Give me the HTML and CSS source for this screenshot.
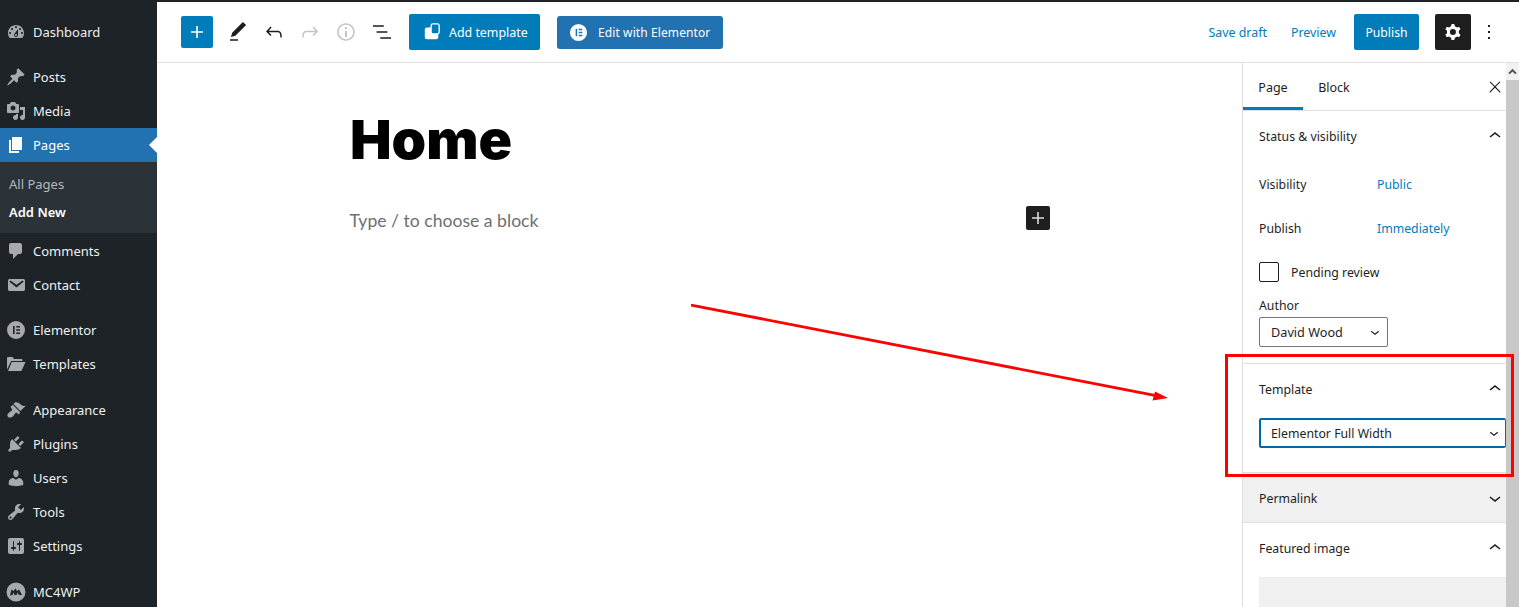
FILE: index.html
```html
<!DOCTYPE html>
<html lang="en">
<head>
<meta charset="utf-8">
<title>Edit Page</title>
<link rel="stylesheet" href="styles.css">
</head>
<body>
<div class="app">
  <nav class="adminmenu">
    <ul class="menu-group first">
      <li class="item"><svg class="dash" viewBox="0 0 20 20"><path fill-rule="evenodd" d="M3.76 16h12.48c1.1-1.37 1.76-3.11 1.76-5 0-4.42-3.58-8-8-8s-8 3.58-8 8c0 1.89.66 3.63 1.76 5zM10 4c.55 0 1 .45 1 1s-.45 1-1 1-1-.45-1-1 .45-1 1-1zM6 6c.55 0 1 .45 1 1s-.45 1-1 1-1-.45-1-1 .45-1 1-1zm8 0c.55 0 1 .45 1 1s-.45 1-1 1-1-.45-1-1 .45-1 1-1zm-5.37 5.55L12 7v6c0 1.1-.9 2-2 2s-2-.9-2-2c0-.57.24-1.08.63-1.45zM4 10c.55 0 1 .45 1 1s-.45 1-1 1-1-.45-1-1 .45-1 1-1zm12 0c.55 0 1 .45 1 1s-.45 1-1 1-1-.45-1-1 .45-1 1-1zm-5 3c0-.55-.45-1-1-1s-1 .45-1 1 .45 1 1 1 1-.45 1-1z"/></svg><span>Dashboard</span></li>
    </ul>
    <ul class="menu-group">
      <li class="item"><svg class="dash" viewBox="0 0 20 20"><path d="M10.44 3.02l1.82-1.82 6.36 6.35-1.83 1.82c-1.05-.68-2.48-.57-3.41.36l-.75.75c-.92.93-1.04 2.35-.35 3.41l-1.83 1.82-2.41-2.41-2.8 2.79c-.42.42-3.38 2.71-3.8 2.29s1.86-3.39 2.28-3.81l2.79-2.79L4.1 9.36l1.83-1.82c1.05.69 2.48.57 3.4-.36l.75-.75c.93-.92 1.05-2.35.36-3.41z"/></svg><span>Posts</span></li>
      <li class="item"><svg class="dash" viewBox="0 0 20 20"><path fill-rule="evenodd" d="M13 11V4c0-.55-.45-1-1-1h-1.67L9 1H5L3.67 3H2c-.55 0-1 .45-1 1v7c0 .55.45 1 1 1h10c.55 0 1-.45 1-1zM7 4.500c1.38 0 2.500 1.120 2.500 2.500S8.380 9.500 7 9.500 4.500 8.380 4.500 7 5.620 4.500 7 4.500zM14 6h5v10.500c0 1.380-1.120 2.500-2.500 2.500S14 17.880 14 16.500s1.120-2.500 2.500-2.500c.17 0 .34.02.5.05V9h-3V6zm-4 8.050V13h2v3.500c0 1.380-1.120 2.500-2.500 2.500S7 17.880 7 16.500 8.120 14 9.500 14c.17 0 .34.02.5.05z"/></svg><span>Media</span></li>
      <li class="item current"><svg class="dash" viewBox="0 0 20 20"><path d="M6 15V2h10v13H6zm-1 1h8v2H3V5h2v11z"/></svg><span>Pages</span></li>
      <li class="submenu">
        <div class="sub-link">All Pages</div>
        <div class="sub-link active">Add New</div>
      </li>
      <li class="item"><svg class="dash" viewBox="0 0 20 20"><path d="M5 2h9c1.1 0 2 .9 2 2v7c0 1.1-.9 2-2 2h-2l-5 5v-5H5c-1.1 0-2-.9-2-2V4c0-1.1.9-2 2-2z"/></svg><span>Comments</span></li>
      <li class="item"><svg class="dash" viewBox="0 0 20 20"><path fill-rule="evenodd" d="M3.87 4h13.25C18.37 4 19 4.59 19 5.79v8.42c0 1.19-.63 1.79-1.88 1.79H3.87c-1.25 0-1.88-.6-1.88-1.79V5.79c0-1.2.63-1.79 1.88-1.79zm6.62 8.6l6.74-5.53c.24-.2.43-.66.13-1.07-.29-.41-.82-.42-1.17-.17l-5.7 3.86L4.8 5.83c-.35-.25-.88-.24-1.17.17-.3.41-.11.87.13 1.07z"/></svg><span>Contact</span></li>
    </ul>
    <ul class="menu-group">
      <li class="item"><svg class="dash" viewBox="0 0 20 20"><path fill-rule="evenodd" d="M10 1a9 9 0 1 0 0 18 9 9 0 0 0 0-18zM7 6h1.600v8H7zm3.200 0H14v1.600h-3.800zm0 3.200H14v1.600h-3.800zm0 3.200H14V14h-3.800z"/></svg><span>Elementor</span></li>
      <li class="item"><svg class="dash" viewBox="0 0 20 20"><path d="M1 15.500V4.200C1 3.500 1.500 3 2.200 3h4.300l1.500 2h7.300c.7 0 1.200.5 1.200 1.200V7H5.200zM2 17l3.800-9H19.500l-3.700 8.200c-.2.500-.7.800-1.200.800z"/></svg><span>Templates</span></li>
    </ul>
    <ul class="menu-group wide">
      <li class="item"><svg class="dash" viewBox="0 0 20 20"><path d="M14.48 11.06L7.41 3.99l1.5-1.5c.5-.56 2.3-.47 3.51.32 1.21.8 1.43 1.28 2.91 2.1 1.18.64 2.45 1.26 4.45.85zm-.71.71L6.7 4.7 4.93 6.47c-.39.39-.39 1.02 0 1.41l1.06 1.06c.39.39.39 1.03 0 1.42-.6.6-1.43 1.11-2.21 1.69-.35.26-.7.53-1.01.84C1.43 13.23.78 15.6 2.07 16.9c1.29 1.29 3.66.64 5.03-.72.31-.31.59-.66.85-1.01.58-.78 1.09-1.61 1.69-2.21.39-.39 1.03-.39 1.42 0l1.06 1.06c.39.39 1.02.39 1.41 0z"/></svg><span>Appearance</span></li>
      <li class="item"><svg class="dash" viewBox="0 0 20 20"><path d="M13.11 4.36L9.87 7.6 8 5.73l3.24-3.24c.35-.34 1.05-.2 1.56.32.52.51.66 1.21.31 1.55zm-8 1.77l.91-1.12 9.01 9.01-1.19.84c-.71.71-2.63 1.16-3.82 1.16H6.14L4.9 17.26c-.59.59-1.54.59-2.12 0-.59-.58-.59-1.53 0-2.12l1.24-1.24v-3.88c0-1.13.4-3.19 1.09-3.89zm7.26 3.97l3.24-3.24c.34-.35 1.04-.21 1.55.31.52.51.66 1.21.31 1.55l-3.24 3.25z"/></svg><span>Plugins</span></li>
      <li class="item"><svg class="dash" viewBox="0 0 20 20"><path d="M10 9.25c-2.27 0-2.73-3.44-2.73-3.44C7 4.02 7.82 2 9.97 2c2.16 0 2.98 2.02 2.71 3.81 0 0-.41 3.44-2.68 3.44zm0 2.57L12.72 10c2.39 0 4.52 2.33 4.52 4.53v2.49s-3.65 1.13-7.24 1.13c-3.65 0-7.24-1.13-7.24-1.13v-2.49c0-2.25 1.94-4.48 4.47-4.48z"/></svg><span>Users</span></li>
      <li class="item"><svg class="dash" viewBox="0 0 20 20"><path fill-rule="evenodd" d="M16.68 9.77c-1.34 1.34-3.3 1.67-4.95.99l-5.41 6.52c-.99.99-2.59.99-3.58 0s-.99-2.59 0-3.57l6.52-5.42c-.68-1.65-.35-3.61.99-4.95 1.28-1.28 3.12-1.62 4.72-1.06l-2.89 2.89 2.82 2.82 2.86-2.87c.53 1.58.18 3.39-1.08 4.65zM3.81 16.21c.4.39 1.04.39 1.43 0 .4-.4.4-1.04 0-1.43-.39-.4-1.03-.4-1.43 0-.39.39-.39 1.03 0 1.43z"/></svg><span>Tools</span></li>
      <li class="item"><svg class="dash" viewBox="0 0 20 20"><path fill-rule="evenodd" d="M18 16V4c0-1.1-.9-2-2-2H4c-1.1 0-2 .9-2 2v12c0 1.1.9 2 2 2h12c1.1 0 2-.9 2-2zM8 11h1c.55 0 1 .45 1 1s-.45 1-1 1H8v1.500c0 .28-.22.5-.5.5s-.5-.22-.5-.5V13H6c-.55 0-1-.45-1-1s.45-1 1-1h1V5.500c0-.28.22-.5.5-.5s.5.22.5.5V11zm5-2h-1c-.55 0-1-.45-1-1s.45-1 1-1h1V5.500c0-.28.22-.5.5-.5s.5.22.5.5V7h1c.55 0 1 .45 1 1s-.45 1-1 1h-1v5.500c0 .28-.22.5-.5.5s-.5-.22-.5-.5V9z"/></svg><span>Settings</span></li>
    </ul>
    <ul class="menu-group wide">
      <li class="item"><svg class="dash" viewBox="0 0 20 20"><path fill-rule="evenodd" d="M10 .5a9.500 9.500 0 1 0 0 19 9.500 9.500 0 0 0 0-19zM4 13.500l1.500-6 2 1.500 2-2.500 1.500 2.500 2-1.500 3 5.500h-3l-1.500-2.500-1 2.500H8.500l-1-2.500-1 2.500z"/></svg><span>MC4WP</span></li>
    </ul>
  </nav>

  <main class="workspace">
    <header class="toolbar">
      <div class="tools">
        <button class="inserter"><svg class="ico" viewBox="0 0 24 24"><path d="M18 11.200h-5.200V6h-1.600v5.200H6v1.600h5.200V18h1.600v-5.200H18z"/></svg></button>
        <div class="icon-row">
          <span class="icon-btn"><svg class="ico" viewBox="0 0 24 24"><path d="M20.100 5.100L16.900 2 6.200 12.700l-1.300 4.400 4.500-1.300L20.100 5.100zM4 20.800h8v-1.500H4v1.500z"/></svg></span>
          <span class="icon-btn"><svg class="ico" viewBox="0 0 24 24"><path d="M18.300 11.700c-.6-.6-1.400-.9-2.300-.9H6.700l2.900-3.300-1.100-1-4.500 5L8.500 16l1-1-2.700-2.700H16c.5 0 .9.2 1.300.5 1 1 1 3.400 1 4.500v.3h1.500v-.2c0-1.500 0-4.300-1.500-5.700z"/></svg></span>
          <span class="icon-btn muted"><svg class="ico" viewBox="0 0 24 24"><path d="M15.600 6.500l-1.100 1 2.900 3.300H8c-.9 0-1.700.3-2.300.9-1.400 1.500-1.400 4.200-1.400 5.600v.2h1.500v-.3c0-1.100 0-3.500 1-4.500.3-.3.7-.5 1.300-.5h9.200L14.500 15l1.100 1.100 4.600-4.600-4.600-5z"/></svg></span>
          <span class="icon-btn muted"><svg class="ico" viewBox="0 0 24 24"><path d="M12 3.200c-4.800 0-8.800 3.900-8.800 8.800 0 4.800 3.900 8.800 8.800 8.800 4.800 0 8.800-3.900 8.800-8.800 0-4.800-4-8.800-8.800-8.800zm0 16c-4 0-7.200-3.300-7.200-7.200C4.800 8 8 4.800 12 4.800s7.200 3.300 7.200 7.200c0 4-3.200 7.200-7.200 7.200zM11 17h2v-6h-2v6zm0-8h2V7h-2v2z"/></svg></span>
          <span class="icon-btn"><svg class="ico" viewBox="0 0 24 24"><path d="M13.800 5.200H3v1.500h10.800V5.200zm-3.600 12v1.500H21v-1.500H10.200zm7.200-6H6.600v1.500h10.800v-1.500z"/></svg></span>
        </div>
        <button class="btn-template"><svg class="tpl-ico" viewBox="0 0 20 20"><path fill="#fff" d="M2 7.500C2 6 3 5 4.500 5H11v7h6v3.500c0 1.500-1 2.500-2.500 2.500h-10C3 18 2 17 2 15.500z"/><rect x="9" y="1" width="9" height="11" rx="2" fill="#007cba" stroke="#fff" stroke-width="1.500"/></svg>Add template</button>
        <button class="btn-elementor"><svg class="el-ico" viewBox="0 0 20 20"><path fill="#fff" fill-rule="evenodd" d="M10 1a9 9 0 1 0 0 18 9 9 0 0 0 0-18zM7 6h1.600v8H7zm3.200 0H14v1.600h-3.800zm0 3.200H14v1.600h-3.800zm0 3.200H14V14h-3.800z"/></svg>Edit with Elementor</button>
      </div>
      <div class="actions">
        <span class="link-action">Save draft</span>
        <span class="link-action preview">Preview</span>
        <button class="btn-publish">Publish</button>
        <button class="btn-settings"><svg class="ico-white" viewBox="0 0 24 24"><path fill-rule="evenodd" d="M10.289 4.836A1 1 0 0111.275 4h1.306a1 1 0 01.987.836l.244 1.466c.787.26 1.503.679 2.108 1.218l1.393-.522a1 1 0 011.216.437l.653 1.130a1 1 0 01-.23 1.273l-1.148.944a6.025 6.025 0 010 2.435l1.149.946a1 1 0 01.23 1.272l-.653 1.130a1 1 0 01-1.216.437l-1.394-.522c-.605.54-1.320.958-2.108 1.218l-.244 1.466a1 1 0 01-.987.836h-1.306a1 1 0 01-.986-.836l-.244-1.466a5.995 5.995 0 01-2.108-1.218l-1.394.522a1 1 0 01-1.217-.436l-.653-1.131a1 1 0 01.23-1.272l1.149-.946a6.026 6.026 0 010-2.435l-1.148-.944a1 1 0 01-.23-1.272l.653-1.131a1 1 0 011.217-.437l1.393.522a5.994 5.994 0 012.108-1.218l.244-1.466zM14.929 12a3 3 0 11-6 0 3 3 0 016 0z"/></svg></button>
        <span class="more"><svg class="ico" viewBox="0 0 24 24"><path d="M13 19h-2v-2h2v2zm0-6h-2v-2h2v2zm0-6h-2V5h2v2z"/></svg></span>
      </div>
    </header>

    <div class="editor">
      <section class="canvas">
        <div class="column">
          <h1 class="post-title">Home</h1>
          <div class="block-row">
            <p class="placeholder">Type / to choose a block</p>
            <span class="block-plus"><svg class="plus-ico" viewBox="0 0 24 24"><path d="M18 11.200h-5.200V6h-1.600v5.200H6v1.600h5.200V18h1.600v-5.200H18z"/></svg></span>
          </div>
        </div>
      </section>

      <aside class="panel">
        <div class="panel-inner">
          <div class="tabs">
            <span class="tab on">Page</span>
            <span class="tab">Block</span>
            <svg class="close" viewBox="0 0 24 24"><path d="M13 11.800l6.100-6.300-1-1-6.100 6.200-6.100-6.200-1 1 6.100 6.300-6.500 6.700 1 1 6.500-6.600 6.500 6.600 1-1z"/></svg>
          </div>

          <section class="sec status">
            <div class="sec-head"><span>Status &amp; visibility</span><svg class="chev" viewBox="0 0 24 24"><path d="M6.500 12.400L12 8l5.500 4.400-.9 1.200L12 10l-4.500 3.600-1-1.200z"/></svg></div>
            <div class="row"><span class="row-label">Visibility</span><span class="row-val">Public</span></div>
            <div class="row"><span class="row-label">Publish</span><span class="row-val">Immediately</span></div>
            <div class="check-row"><span class="check"></span><span>Pending review</span></div>
            <div class="author-label">Author</div>
            <div class="select author"><span>David Wood</span><svg class="chev-s" viewBox="0 0 24 24"><path d="M17.500 11.600L12 16l-5.500-4.400.9-1.200L12 14l4.500-3.600 1 1.200z"/></svg></div>
          </section>

          <section class="sec template">
            <div class="sec-head"><span>Template</span><svg class="chev" viewBox="0 0 24 24"><path d="M6.500 12.400L12 8l5.500 4.400-.9 1.200L12 10l-4.500 3.600-1-1.200z"/></svg></div>
            <div class="select focus"><span>Elementor Full Width</span><svg class="chev-s" viewBox="0 0 24 24"><path d="M17.500 11.600L12 16l-5.500-4.400.9-1.200L12 14l4.500-3.600 1 1.200z"/></svg></div>
          </section>

          <section class="sec permalink">
            <div class="sec-head"><span>Permalink</span><svg class="chev" viewBox="0 0 24 24"><path d="M17.500 11.600L12 16l-5.500-4.400.9-1.200L12 14l4.500-3.600 1 1.200z"/></svg></div>
          </section>

          <section class="sec featured">
            <div class="sec-head"><span>Featured image</span><svg class="chev" viewBox="0 0 24 24"><path d="M6.500 12.400L12 8l5.500 4.400-.9 1.200L12 10l-4.500 3.600-1-1.200z"/></svg></div>
            <div class="img-box"></div>
          </section>
        </div>
        <div class="scrollbar">
          <div class="scroll-up"><svg class="scroll-arrow" viewBox="0 0 12 12"><path d="M6 3L1.500 7.500 3 9l3-3 3 3 1.500-1.500z"/></svg></div>
          <div class="scroll-thumb"></div>
        </div>
      </aside>
    </div>
  </main>
</div>

<svg class="arrow" viewBox="0 0 480 105"><line x1="0" y1="5" x2="465" y2="95.600" stroke="#f00" stroke-width="2.800"/><polygon points="477,98 464,91.500 461.500,100.500" fill="#f00"/></svg>
<div class="highlight"></div>
</body>
</html>
```
FILE: styles.css
```css
* { box-sizing: border-box; }
html, body { margin: 0; height: 100%; overflow: hidden; background: #fff; }
body { font-family: "Noto Sans", "Open Sans", sans-serif; font-size: 13px; color: #1e1e1e; position: relative; }
ul { list-style: none; margin: 0; padding: 0; }
button { font: inherit; border: 0; margin: 0; padding: 0; color: #fff; }
svg { display: block; flex: none; }

.app { display: grid; grid-template-columns: 157px 1fr; height: 607px; }

/* admin menu */
.adminmenu { background: #1d2327; color: #f0f0f1; overflow: hidden; padding-top: 15px; }
.menu-group { margin-top: 11px; }
.menu-group.first { margin-top: 0; }
.menu-group.wide { margin-top: 12px; }
.item { height: 34px; display: flex; align-items: center; position: relative; padding-left: 6px; gap: 7px; }
.dash { width: 20px; height: 20px; fill: #a7aaad; }
.item.current { background: #2271b1; color: #fff; }
.item.current .dash { fill: #fff; }
.item.current::after { content: ""; position: absolute; right: 0; top: 9px; border: 8px solid transparent; border-right-color: #fff; border-left-width: 0; }
.submenu { height: 71px; background: #2c3338; padding: 8px 0 0 9px; margin-bottom: 1px; }
.sub-link { height: 28px; line-height: 28px; color: #b4b9be; }
.sub-link.active { color: #fff; font-weight: 600; }

/* toolbar */
.workspace { display: flex; flex-direction: column; min-width: 0; border-top: 2px solid #1d2327; }
.toolbar { height: 61px; flex: none; border-bottom: 1px solid #e0e0e0; display: flex; justify-content: space-between; padding: 0 18px 0 24px; font-size: 12.4px; }
.tools, .actions, .icon-row { display: flex; align-items: center; }
.inserter { width: 32px; height: 32px; background: #007cba; border-radius: 2px; display: flex; align-items: center; justify-content: center; margin-right: 7px; }
.ico { width: 24px; height: 24px; fill: #1e1e1e; }
.inserter .ico { fill: #fff; }
.icon-btn { width: 36px; height: 36px; display: flex; align-items: center; justify-content: center; }
.icon-btn.muted .ico { fill: #c4c4c4; }
.btn-template { margin-left: 9px; width: 131px; height: 36px; background: #007cba; border-radius: 2px; display: flex; align-items: center; padding-left: 14px; gap: 8px; }
.tpl-ico { width: 18px; height: 18px; }
.btn-elementor { margin-left: 17px; width: 166px; height: 33px; background: #2271b1; border-radius: 3px; display: flex; align-items: center; padding-left: 12px; gap: 10px; font-size: 12px; letter-spacing: .1px; }
.el-ico { width: 19px; height: 19px; }
.link-action { color: #007cba; margin-right: 24px; }
.link-action.preview { margin-right: 18px; }
.btn-publish { width: 65px; height: 36px; background: #007cba; border-radius: 2px; margin-right: 16px; font-size: 12.2px; }
.btn-settings { width: 36px; height: 36px; background: #1e1e1e; border-radius: 2px; display: flex; align-items: center; justify-content: center; }
.ico-white { width: 24px; height: 24px; fill: #fff; }
.more { margin-left: 6px; }

/* editor */
.editor { flex: 1; display: flex; min-height: 0; }
.canvas { flex: 1; min-width: 0; }
.column { width: 700px; margin: 0 auto; padding-top: 44px; }
.post-title { margin: 0; font-family: Inter, "Liberation Sans", sans-serif; font-weight: 900; font-size: 54px; line-height: 66px; color: #000; transform: scaleX(1.026); transform-origin: left center; }
.block-row { display: flex; justify-content: space-between; align-items: center; margin-top: 33px; }
.placeholder { margin: 0; font-family: Lato, "Open Sans", sans-serif; font-size: 17.6px; line-height: 30px; color: #6c7074; }
.block-plus { width: 24px; height: 24px; background: #1e1e1e; border-radius: 2px; display: flex; align-items: center; justify-content: center; margin-top: -6px; }
.plus-ico { width: 24px; height: 24px; fill: #ddd; }

/* panel */
.panel { width: 277px; flex: none; border-left: 1px solid #e0e0e0; display: flex; overflow: hidden; font-size: 12.3px; }
.panel-inner { width: 263px; flex: none; overflow: hidden; }
.tabs { height: 48px; border-bottom: 1px solid #e0e0e0; display: flex; align-items: center; position: relative; font-size: 12.5px; }
.tab { width: 60px; height: 47px; line-height: 49px; text-align: center; position: relative; }
.tab.on::after { content: ""; position: absolute; left: 0; right: 0; bottom: 0; height: 3px; background: #007cba; }
.tab + .tab { width: 62px; }
.close { width: 18px; height: 18px; fill: #1e1e1e; margin-left: auto; margin-right: 2px; }
.sec { border-bottom: 1px solid #e0e0e0; padding-left: 16px; }
.sec-head { height: 50px; display: flex; align-items: center; justify-content: space-between; }
.chev { width: 24px; height: 24px; fill: #1e1e1e; margin-right: -1px; margin-top: -1px; }
.status { height: 253px; }
.row { height: 44px; display: flex; align-items: center; }
.sec-head + .row { margin-top: 1px; }
.row-label { width: 118px; }
.row-val { color: #007cba; }
.check-row { display: flex; align-items: center; gap: 12px; height: 20px; margin-top: 12px; }
.check { width: 20px; height: 20px; border: 1px solid #1e1e1e; border-radius: 2px; }
.author-label { margin-top: 14px; line-height: 20px; }
.select { display: flex; align-items: center; justify-content: space-between; height: 30px; border: 1px solid #757575; border-radius: 2px; padding: 0 0 0 11px; margin-top: 1px; }
.author { width: 129px; font-size: 12.7px; }
.chev-s { width: 18px; height: 18px; fill: #1e1e1e; margin-right: 3px; }
.template { height: 109px; }
.focus { width: 247px; margin-top: 4px; border: 2px solid #006ba1; padding-left: 10px; border-right-width: 1px; }
.focus .chev-s { margin-right: 2px; }
.permalink { height: 50px; background: #f0f0f0; }
.permalink .sec-head { height: 49px; padding-top: 2px; }
.featured { border-bottom: 0; }
.img-box { height: 60px; background: #f0f0f0; margin-top: 4px; }
.scrollbar { width: 13px; flex: none; background: #c8c8c8; }
.scroll-up { height: 17px; background: #f1f1f1; display: flex; align-items: center; justify-content: center; }
.scroll-arrow { width: 11px; height: 11px; fill: #505050; }
.scroll-thumb { height: 100%; }

/* annotations laid over the screenshot */
.arrow { position: absolute; left: 691px; top: 300px; width: 480px; height: 105px; }
.highlight { position: absolute; left: 1225px; top: 354px; width: 289px; height: 123px; border: 3px solid #f00; }
```
